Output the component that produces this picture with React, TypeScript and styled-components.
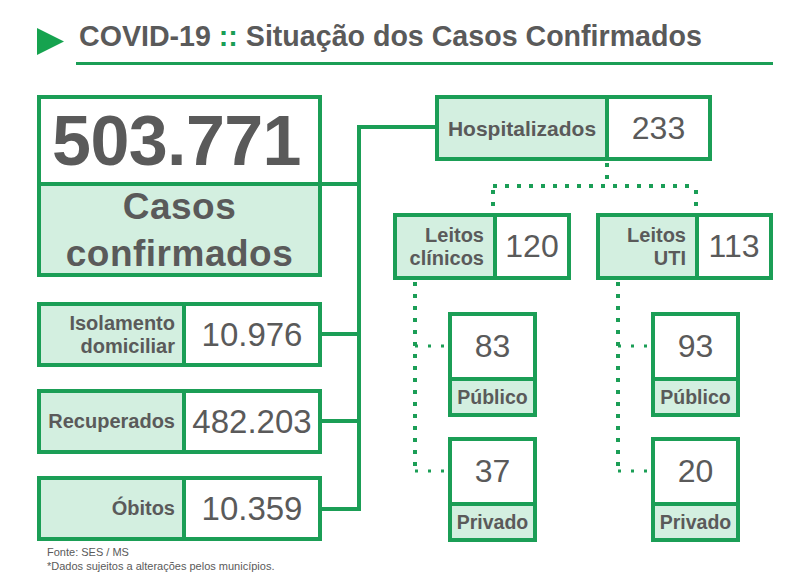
import React from 'react';
import styled, { createGlobalStyle } from 'styled-components';

const GREEN = '#1b9e56';
const FILL = '#d3efe0';
const INK = '#5a5a5a';

const GlobalStyle = createGlobalStyle`
  html, body {
    margin: 0;
    padding: 0;
    background: #ffffff;
  }
  * {
    box-sizing: border-box;
  }
`;

const Page = styled.div`
  position: relative;
  width: 800px;
  height: 587px;
  overflow: hidden;
  background: #ffffff;
  color: ${INK};
  font-family: 'Liberation Sans', Arial, sans-serif;
`;

const Header = styled.header`
  display: flex;
  align-items: flex-start;
  padding: 20px 0 0 37px;
`;

const Arrow = styled.svg`
  flex: none;
  margin-top: 8px;
`;

const TitleWrap = styled.div`
  width: 697px;
  margin-left: 12px;
  border-bottom: 3px solid ${GREEN};
  padding: 0 0 9px 3px;
`;

const Title = styled.h1`
  margin: 0;
  font-size: 28.6px;
  line-height: 33px;
  font-weight: 700;
  color: ${INK};
  white-space: nowrap;
`;

const Sep = styled.span`
  color: ${GREEN};
`;

const Diagram = styled.main`
  display: grid;
  grid-template-columns: 285px 380px;
  column-gap: 71px;
  align-items: start;
  margin-top: 30px;
  padding-left: 37px;
`;

const LeftCol = styled.div`
  display: flex;
  flex-direction: column;
  gap: 22px;
`;

const BigBox = styled.section`
  display: flex;
  flex-direction: column;
  width: 285px;
  height: 182px;
  border: 4px solid ${GREEN};
  margin-bottom: 3px;
`;

const BigNumber = styled.div`
  height: 87px;
  flex: none;
  border-bottom: 4px solid ${GREEN};
  display: flex;
  align-items: center;
  justify-content: center;
  padding-right: 6px;
  font-size: 70px;
  font-weight: 700;
  letter-spacing: -0.6px;
  background: #fff;
`;

const BigLabel = styled.div`
  height: 87px;
  flex: none;
  display: flex;
  align-items: center;
  justify-content: center;
  text-align: center;
  background: ${FILL};
  font-size: 37px;
  line-height: 47px;
  font-weight: 700;
  letter-spacing: 0.5px;
`;

const SplitBox = styled.div<{ $cols: string; $w: number; $h: number; $ml?: number }>`
  display: grid;
  grid-template-columns: ${(p) => p.$cols};
  width: ${(p) => p.$w}px;
  height: ${(p) => p.$h}px;
  margin-left: ${(p) => p.$ml ?? 0}px;
  border: 4px solid ${GREEN};
  background: #fff;
`;

const LabelCell = styled.div<{ $align: 'right' | 'center'; $size: number; $pr?: number }>`
  display: flex;
  flex-direction: column;
  justify-content: center;
  align-items: ${(p) => (p.$align === 'right' ? 'flex-end' : 'center')};
  text-align: ${(p) => p.$align};
  padding-right: ${(p) => p.$pr ?? 0}px;
  background: ${FILL};
  border-right: 4px solid ${GREEN};
  font-size: ${(p) => p.$size}px;
  line-height: 23px;
  font-weight: 700;
  white-space: nowrap;
`;

const ValueCell = styled.div<{ $size: number }>`
  display: flex;
  align-items: center;
  justify-content: center;
  font-size: ${(p) => p.$size}px;
  white-space: nowrap;
`;

const RightCol = styled.div`
  display: flex;
  flex-direction: column;
`;

const PairRow = styled.div`
  display: flex;
  gap: 25px;
  margin-top: 52px;
`;

const Branch = styled.div`
  display: flex;
  flex-direction: column;
`;

const Subs = styled.div`
  display: flex;
  flex-direction: column;
  gap: 20px;
  margin-top: 32px;
  padding-left: 55px;
`;

const SmallBox = styled.div`
  display: flex;
  flex-direction: column;
  width: 89px;
  height: 105px;
  border: 4px solid ${GREEN};
`;

const SmallValue = styled.div`
  height: 65px;
  border-bottom: 4px solid ${GREEN};
  display: flex;
  align-items: center;
  justify-content: center;
  font-size: 32px;
  background: #fff;
`;

const SmallLabel = styled.div`
  flex: 1;
  display: flex;
  align-items: center;
  justify-content: center;
  background: ${FILL};
  font-size: 19.5px;
  font-weight: 700;
`;

const Connectors = styled.svg`
  position: absolute;
  left: 0;
  top: 0;
  pointer-events: none;
`;

const Footer = styled.footer`
  padding: 3px 0 0 47px;
  font-size: 11px;
  line-height: 14px;
  color: ${INK};
`;

const FootLine = styled.div`
  white-space: nowrap;
`;

type Stat = { label: string[]; value: string };

const stats: Stat[] = [
  { label: ['Isolamento', 'domiciliar'], value: '10.976' },
  { label: ['Recuperados'], value: '482.203' },
  { label: ['Óbitos'], value: '10.359' },
];

type Bed = { label: string[]; value: string; cols: string; w: number; pub: string; priv: string };

const beds: Bed[] = [
  { label: ['Leitos', 'clínicos'], value: '120', cols: '100px 1fr', w: 178, pub: '83', priv: '37' },
  { label: ['Leitos', 'UTI'], value: '113', cols: '99px 1fr', w: 177, pub: '93', priv: '20' },
];

function Lines({ labels }: { labels: string[] }) {
  return (
    <>
      {labels.map((l) => (
        <span key={l}>{l}</span>
      ))}
    </>
  );
}

function App() {
  const dotted = { stroke: GREEN, strokeWidth: 4, strokeDasharray: '4 8', fill: 'none' };
  const fine = { stroke: GREEN, strokeWidth: 3, strokeDasharray: '3 10', fill: 'none' };

  return (
    <Page>
      <GlobalStyle />
      <Header>
        <Arrow width="27" height="27" viewBox="0 0 27 27">
          <polygon points="0,0 27,13.5 0,27" fill="#16a34f" />
        </Arrow>
        <TitleWrap>
          <Title>
            COVID-19 <Sep>::</Sep> Situação dos Casos Confirmados
          </Title>
        </TitleWrap>
      </Header>

      <Diagram>
        <LeftCol>
          <BigBox>
            <BigNumber>503.771</BigNumber>
            <BigLabel>
              Casos
              <br />
              confirmados
            </BigLabel>
          </BigBox>
          {stats.map((s) => (
            <SplitBox key={s.value} $cols="145px 1fr" $w={285} $h={65}>
              <LabelCell $align="right" $size={20} $pr={7}>
                <Lines labels={s.label} />
              </LabelCell>
              <ValueCell $size={33}>{s.value}</ValueCell>
            </SplitBox>
          ))}
        </LeftCol>

        <RightCol>
          <SplitBox $cols="170px 1fr" $w={277} $h={66} $ml={42}>
            <LabelCell $align="center" $size={21}>
              Hospitalizados
            </LabelCell>
            <ValueCell $size={32}>233</ValueCell>
          </SplitBox>
          <PairRow>
            {beds.map((b) => (
              <Branch key={b.value}>
                <SplitBox $cols={b.cols} $w={b.w} $h={67}>
                  <LabelCell $align="right" $size={20} $pr={9}>
                    <Lines labels={b.label} />
                  </LabelCell>
                  <ValueCell $size={32}>{b.value}</ValueCell>
                </SplitBox>
                <Subs>
                  <SmallBox>
                    <SmallValue>{b.pub}</SmallValue>
                    <SmallLabel>Público</SmallLabel>
                  </SmallBox>
                  <SmallBox>
                    <SmallValue>{b.priv}</SmallValue>
                    <SmallLabel>Privado</SmallLabel>
                  </SmallBox>
                </Subs>
              </Branch>
            ))}
          </PairRow>
        </RightCol>
      </Diagram>

      <Footer>
        <FootLine>Fonte: SES / MS</FootLine>
        <FootLine>*Dados sujeitos a alterações pelos municípios.</FootLine>
      </Footer>

      <Connectors width="800" height="587" viewBox="0 0 800 587">
        <g stroke={GREEN} strokeWidth="4" fill="none">
          <path d="M322 184 H361" />
          <path d="M359 125 V511" />
          <path d="M359 127 H436" />
          <path d="M322 334 H361" />
          <path d="M322 421 H361" />
          <path d="M322 509 H361" />
        </g>
        <path d="M607 163 V186" {...dotted} />
        <path d="M493 186 H697" {...dotted} />
        <path d="M493 190 V212" {...dotted} />
        <path d="M696 190 V212" {...dotted} />
        <path d="M415 282 V474" {...dotted} />
        <path d="M618 282 V474" {...dotted} />
        <path d="M415 346 H447" {...fine} />
        <path d="M415 471 H447" {...fine} />
        <path d="M618 346 H651" {...fine} />
        <path d="M618 471 H651" {...fine} />
      </Connectors>
    </Page>
  );
}

export default App;
